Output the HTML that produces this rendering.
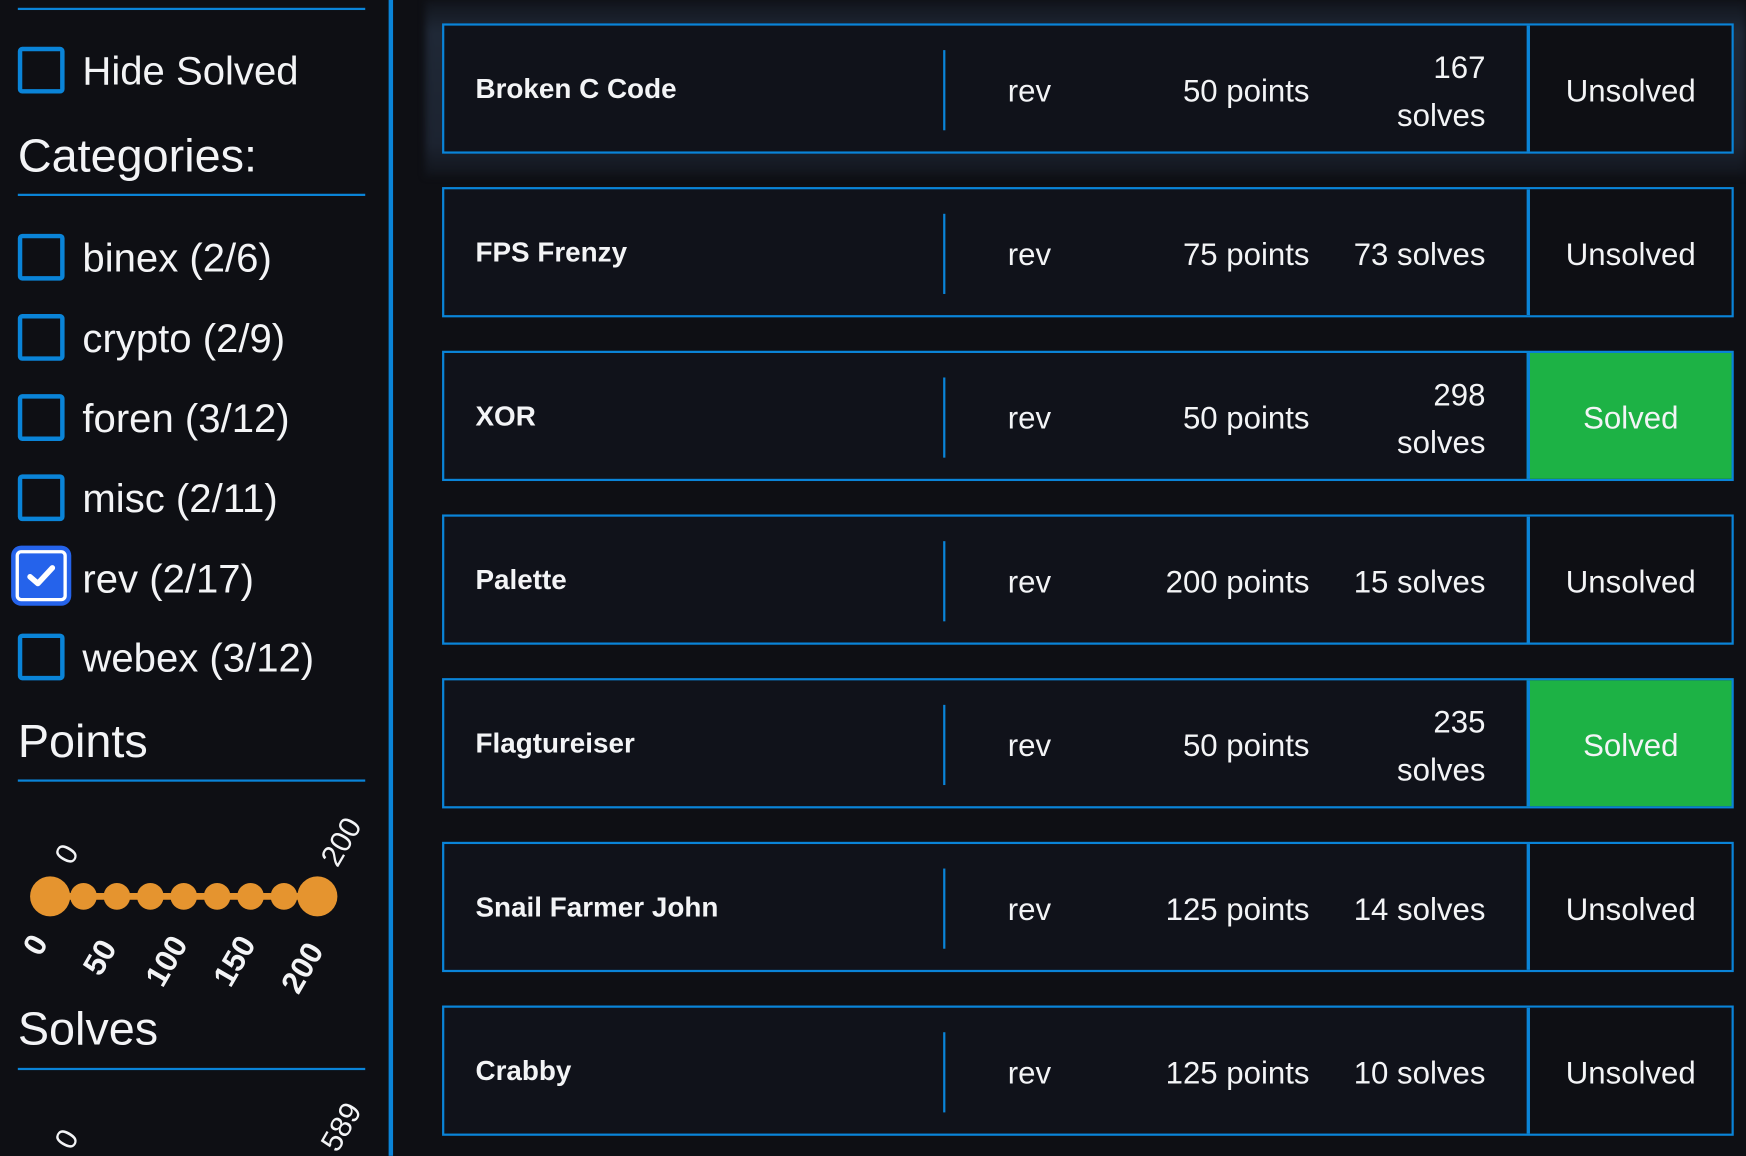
<!DOCTYPE html>
<html><head><meta charset="utf-8"><style>
html,body{margin:0;padding:0;width:1746px;height:1156px;overflow:hidden;background:#0e0f14;}
#w{position:absolute;left:0;top:0;width:1568px;height:1038px;transform:scale(1.11352);transform-origin:0 0;font-family:"Liberation Sans",sans-serif;color:#f3f4f6;}
.a{position:absolute;}
.hl{position:absolute;left:16px;width:312px;height:2px;background:#0a84d8;}
.cb{position:absolute;left:16px;width:34px;height:34px;border:4px solid #0a84d8;border-radius:4px;}
.lb{position:absolute;left:74px;font-size:36px;line-height:40px;white-space:nowrap;}
.h{position:absolute;left:16px;font-size:42px;line-height:48px;}
.card{position:absolute;left:397px;width:1156px;height:113px;border:2px solid #0a84d8;background:#10121a;}
.nm{position:absolute;left:28px;top:0;height:113px;line-height:115px;font-weight:bold;font-size:25px;}
.dv{position:absolute;left:448px;top:22px;width:2px;height:72px;background:#0a84d8;}
.cat{position:absolute;left:468px;width:115px;text-align:center;top:0;line-height:117px;font-size:28px;}
.pt{position:absolute;right:379px;top:0;line-height:117px;font-size:28px;white-space:nowrap;}
.sv{position:absolute;right:221px;width:130px;text-align:right;top:2px;height:113px;display:flex;align-items:center;justify-content:flex-end;font-size:28px;line-height:43px;}
.st{position:absolute;right:0;top:0;width:181px;height:113px;border-left:3px solid #0a84d8;text-align:center;line-height:117px;font-size:28px;background:#0e0f14;}
.ok{background:#1db245;}
</style></head><body><div id="w">
<div class="a" style="left:349px;top:0;width:4px;height:1038px;background:#0a84d8"></div>
<div class="hl" style="top:7px"></div>
<div class="cb" style="top:42px"></div><div class="lb" style="top:44px">Hide Solved</div>
<div class="h" style="top:116px">Categories:</div>
<div class="hl" style="top:174px"></div>
<div class="cb" style="top:210px"></div><div class="lb" style="top:212px">binex (2/6)</div>
<div class="cb" style="top:282px"></div><div class="lb" style="top:284px">crypto (2/9)</div>
<div class="cb" style="top:354px"></div><div class="lb" style="top:356px">foren (3/12)</div>
<div class="cb" style="top:426px"></div><div class="lb" style="top:428px">misc (2/11)</div>
<div class="a" style="left:10px;top:490px;width:54px;height:54px;border-radius:9px;background:#2563eb;"><div style="position:absolute;left:4px;top:4px;width:40px;height:40px;border:3px solid #fff;border-radius:5px;"></div>
<svg class="a" style="left:0;top:0" width="54" height="54"><path d="M17 28 L24 34 L37 20" stroke="#fff" stroke-width="5" fill="none" stroke-linecap="round" stroke-linejoin="round"/></svg></div>
<div class="lb" style="top:500px">rev (2/17)</div>
<div class="cb" style="top:569px"></div><div class="lb" style="top:571px">webex (3/12)</div>
<div class="h" style="top:642px">Points</div>
<div class="hl" style="top:700px"></div>
<svg class="a" style="left:0;top:710px" width="349" height="200" font-family="Liberation Sans,sans-serif" fill="#f3f4f6">
<line x1="45" y1="95" x2="285" y2="95" stroke="#e5942f" stroke-width="6"/>
<g fill="#e5942f"><circle cx="45" cy="95" r="18"/><circle cx="285" cy="95" r="18"/>
<circle cx="75" cy="95" r="12"/><circle cx="105" cy="95" r="12"/><circle cx="135" cy="95" r="12"/><circle cx="165" cy="95" r="12"/><circle cx="195" cy="95" r="12"/><circle cx="225" cy="95" r="12"/><circle cx="255" cy="95" r="12"/></g>
<text font-size="27" transform="translate(64,68) rotate(-60)">0</text>
<text font-size="27" transform="translate(303,70) rotate(-60)">200</text>
<g font-weight="bold" font-size="28">
<text transform="translate(36,150) rotate(-60)">0</text>
<text transform="translate(90,168) rotate(-60)">50</text>
<text transform="translate(146,178) rotate(-60)">100</text>
<text transform="translate(207,178) rotate(-60)">150</text>
<text transform="translate(268,184) rotate(-60)">200</text></g>
</svg>
<div class="h" style="top:900px">Solves</div>
<div class="hl" style="top:959px"></div>
<svg class="a" style="left:0;top:970px" width="349" height="68" font-family="Liberation Sans,sans-serif" fill="#f3f4f6">
<text font-size="27" transform="translate(64,64) rotate(-60)">0</text>
<text font-size="27" transform="translate(303,66) rotate(-60)">589</text>
</svg>
<div class="a" style="left:382px;top:0;width:1186px;height:158px;background:linear-gradient(#11141b,#1f2836 18%,#1c2330 82%,#11141b);filter:blur(3px)"></div>

<div class="card" style="top:21px"><div class="nm">Broken C Code</div><div class="dv"></div><div class="cat">rev</div><div class="pt">50 points</div><div class="sv">167<br>solves</div><div class="st">Unsolved</div></div>
<div class="card" style="top:168px"><div class="nm">FPS Frenzy</div><div class="dv"></div><div class="cat">rev</div><div class="pt">75 points</div><div class="sv">73 solves</div><div class="st">Unsolved</div></div>
<div class="card" style="top:315px"><div class="nm">XOR</div><div class="dv"></div><div class="cat">rev</div><div class="pt">50 points</div><div class="sv">298<br>solves</div><div class="st ok">Solved</div></div>
<div class="card" style="top:462px"><div class="nm">Palette</div><div class="dv"></div><div class="cat">rev</div><div class="pt">200 points</div><div class="sv">15 solves</div><div class="st">Unsolved</div></div>
<div class="card" style="top:609px"><div class="nm">Flagtureiser</div><div class="dv"></div><div class="cat">rev</div><div class="pt">50 points</div><div class="sv">235<br>solves</div><div class="st ok">Solved</div></div>
<div class="card" style="top:756px"><div class="nm">Snail Farmer John</div><div class="dv"></div><div class="cat">rev</div><div class="pt">125 points</div><div class="sv">14 solves</div><div class="st">Unsolved</div></div>
<div class="card" style="top:903px"><div class="nm">Crabby</div><div class="dv"></div><div class="cat">rev</div><div class="pt">125 points</div><div class="sv">10 solves</div><div class="st">Unsolved</div></div>
</div></body></html>
